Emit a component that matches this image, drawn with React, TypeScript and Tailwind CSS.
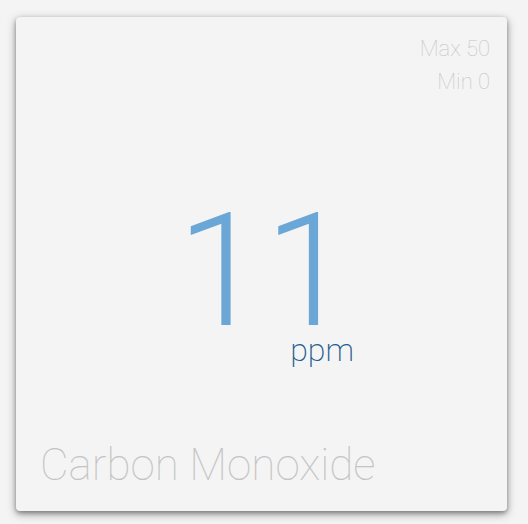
export default function App(): JSX.Element {
  return (
    <div className="flex h-[524px] w-[528px] items-start bg-[#f4f4f4] pl-4 pt-[17px]" style={{ fontFamily: 'Roboto, "Liberation Sans", sans-serif' }}>
      <div className="flex h-[494px] w-[491px] flex-col rounded bg-[#f4f4f4] shadow-[0_2px_4px_rgba(0,0,0,0.3),0_3px_10px_rgba(0,0,0,0.35)]">
        <div className="flex flex-col items-end pr-[17px] pt-[15px] text-[22px] font-thin leading-[33px] text-[#c4c4c4]">
          <span>Max 50</span>
          <span>Min 0</span>
        </div>
        <div className="flex flex-1 items-center justify-center pl-[8px]">
          <div className="flex items-end">
            <span className="text-[158px] font-light leading-none text-[#6aa6d6]">11</span>
            <span className="-ml-[62px] mb-[-16px] text-[32px] font-extralight leading-none text-[#1f5c90]">ppm</span>
          </div>
        </div>
        <div className="pb-[24px] pl-6 text-[44px] font-thin leading-none text-[#c4c4c4]">Carbon Monoxide</div>
      </div>
    </div>
  );
}
